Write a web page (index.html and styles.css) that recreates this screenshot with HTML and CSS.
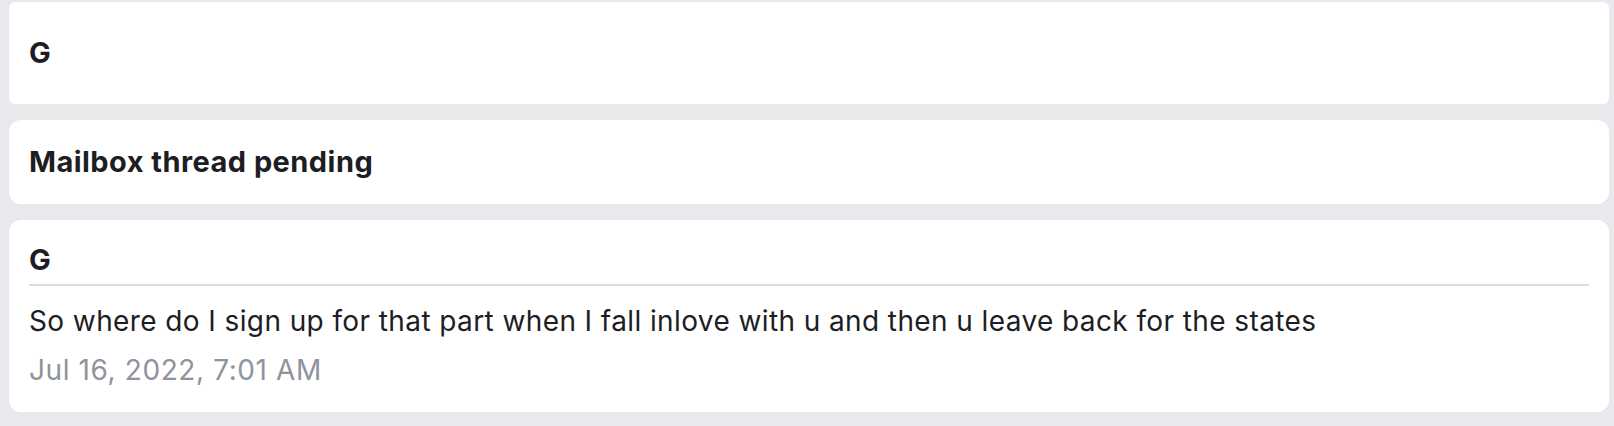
FILE: index.html
```html
<!DOCTYPE html>
<html lang="en">
<head>
<meta charset="utf-8">
<title>Mailbox thread</title>
<link rel="stylesheet" href="styles.css">
</head>
<body>
<main class="stack">
  <section class="card card-head">
    <h1 class="title">G</h1>
  </section>
  <section class="card card-status">
    <h2 class="title">Mailbox thread pending</h2>
  </section>
  <article class="card card-message">
    <header class="msg-head">
      <h3 class="title">G</h3>
    </header>
    <p class="msg-body">So where do I sign up for that part when I fall inlove with u and then u leave back for the states</p>
    <time class="msg-time">Jul 16, 2022, 7:01 AM</time>
  </article>
</main>
</body>
</html>
```
FILE: styles.css
```css
html, body {
  margin: 0;
  padding: 0;
  background: #e8e9ed;
}
body {
  font-family: Inter, "Noto Sans", "Liberation Sans", sans-serif;
  color: #1c1e23;
}
.stack {
  display: flex;
  flex-direction: column;
  gap: 16px;
  padding: 2px 5px 14px 9px;
}
.card {
  background: #ffffff;
  border-radius: 12px;
  padding: 0 20px;
}
.title {
  margin: 0;
  font-size: 29px;
  font-weight: 700;
  line-height: 36px;
  letter-spacing: 0.45px;
}
.card-head {
  border-radius: 6px;
  height: 102px;
  display: flex;
  align-items: center;
}
.card-status {
  height: 84px;
  display: flex;
  align-items: center;
}
.card-message {
  height: 192px;
  box-sizing: border-box;
  padding-top: 22px;
  display: flex;
  flex-direction: column;
}
.msg-head {
  border-bottom: 2px solid #dcdce0;
  padding-bottom: 6px;
}
.msg-body {
  margin: 15px 0 0;
  font-size: 28px;
  line-height: 40px;
  letter-spacing: 0.4px;
}
.msg-time {
  font-size: 28px;
  line-height: 40px;
  margin-top: 9px;
  letter-spacing: 0.6px;
  color: #8e939c;
}
```
